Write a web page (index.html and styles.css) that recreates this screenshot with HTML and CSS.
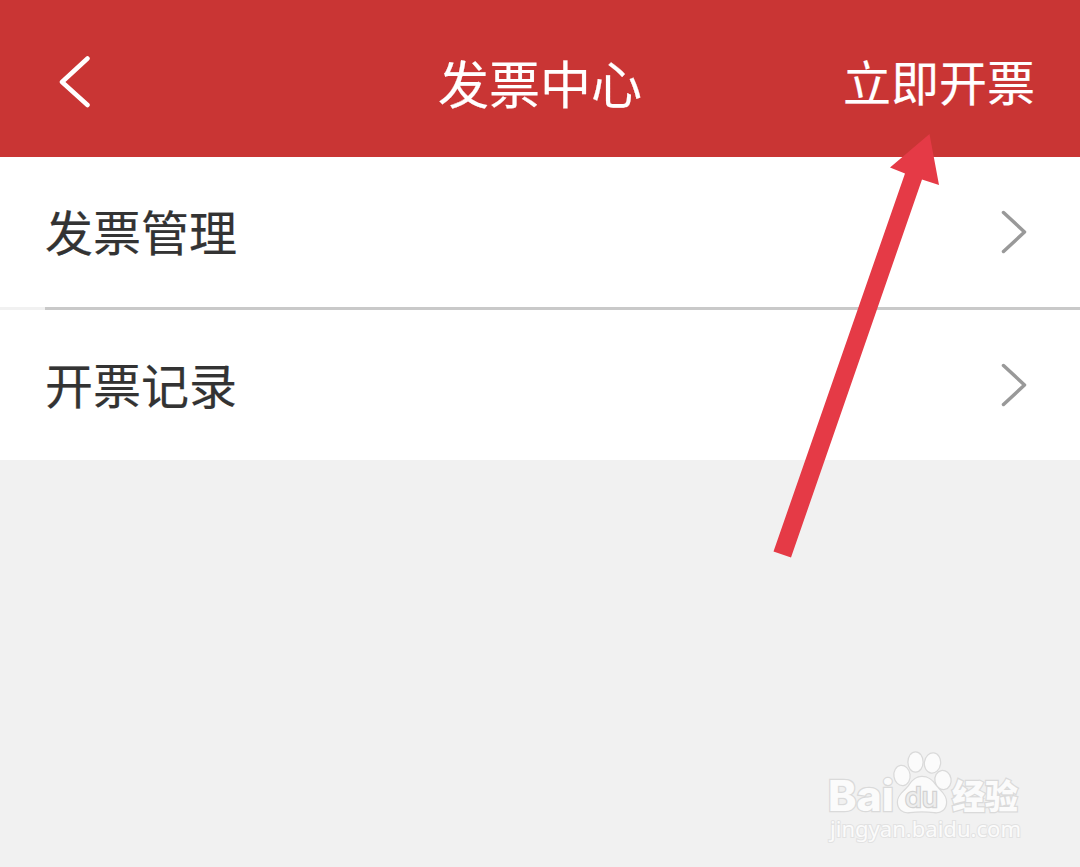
FILE: index.html
```html
<!DOCTYPE html>
<html lang="zh-CN">
<head>
    <meta charset="utf-8">
    <meta name="viewport" content="width=device-width, initial-scale=1">
    <title>发票中心</title>
    <link rel="stylesheet" href="styles.css">
</head>
<body>
    <header class="header">
        <button class="back-btn" aria-label="返回">
            <svg width="34" height="54" viewBox="0 0 34 54">
                <path d="M30.5 2.5L5 26L30.5 49"/>
            </svg>
        </button>
        <h1>发票中心</h1>
        <button class="header-btn">立即开票</button>
    </header>
    <main class="list">
        <a class="list-item">
            <span>发票管理</span>
            <svg class="chevron" width="28" height="46" viewBox="0 0 28 46">
                <path d="M3.5 3.5L24.5 23L3.5 42.5"/>
            </svg>
        </a>
        <div class="divider"></div>
        <a class="list-item">
            <span>开票记录</span>
            <svg class="chevron" width="28" height="46" viewBox="0 0 28 46">
                <path d="M3.5 3.5L24.5 23L3.5 42.5"/>
            </svg>
        </a>
    </main>

    <!-- Pointer to the invoice button -->
    <svg class="arrow" width="180" height="440" viewBox="760 125 180 440">
        <polygon points="929.5,134 939,185 922,179.500 791,557.500 773.500,551.500 905,173.500 890,167.500"/>
    </svg>

    <!-- Watermark -->
    <svg class="watermark" width="210" height="105" viewBox="820 745 210 105">
        <g class="mark">
            <text class="mark-latin" x="828" y="811" textLength="66" lengthAdjust="spacingAndGlyphs">Bai</text>
            <ellipse cx="902" cy="775.500" rx="7.500" ry="9.500" transform="rotate(-8 902 775.500)"/>
            <ellipse cx="915.500" cy="762" rx="7" ry="9.500"/>
            <ellipse cx="932.500" cy="763" rx="7.500" ry="9.500" transform="rotate(8 932.500 763)"/>
            <ellipse cx="943" cy="780" rx="7.500" ry="9" transform="rotate(-10 943 780)"/>
            <path d="M922 777C916 777 912 781 909 786C905 791 898 795 898 802C898 809 903 813 910 812C918 811 926 811 934 812C941 813 946 809 946 802C946 795 940 791 936 786C932 780 928 777 922 777Z"/>
            <text class="mark-cn" x="952" y="809" textLength="66" lengthAdjust="spacingAndGlyphs">经验</text>
            <text class="mark-url" x="830" y="837" textLength="191" lengthAdjust="spacingAndGlyphs">jingyan.baidu.com</text>
        </g>
        <text class="mark-du" x="905" y="807" textLength="33" lengthAdjust="spacingAndGlyphs">du</text>
    </svg>
</body>
</html>
```
FILE: styles.css
```css
body {
    background-color: #f1f1f1;
    font-family: "Noto Sans CJK SC", sans-serif;
    margin: 0;
    overflow: hidden;
}
button {
    background: none;
    border: none;
    padding: 0;
    color: inherit;
    font: inherit;
    cursor: pointer;
}
svg {
    display: block;
    fill: none;
}
/* Header */
.header {
    display: grid;
    grid-template-columns: 1fr auto 1fr;
    align-items: center;
    height: 157px;
    padding: 8px 45px 0 57px;
    box-sizing: border-box;
    background-color: #c93534;
    color: #fff;
    -webkit-text-stroke: 0.2px;
}
.header h1 {
    margin: 0 0 2px -12px; /* Keeps the title on the page centre */
    font-size: 51px;
    font-weight: 400;
    line-height: 72px;
}
.back-btn {
    justify-self: start;
}
.back-btn path {
    stroke: #fff;
    stroke-width: 4.5;
    stroke-linecap: round;
    stroke-linejoin: round;
}
.header-btn {
    justify-self: end;
    margin-bottom: 5px;
    font-size: 48px;
    line-height: 70px;
}
/* List */
.list {
    background-color: #fff;
}
.list-item {
    display: flex;
    align-items: center;
    justify-content: space-between;
    height: 150px;
    padding: 0 52px 0 45px;
    color: #333;
    font-size: 48px;
    line-height: 70px;
    -webkit-text-stroke: 0.2px;
}
.list-item span {
    margin-bottom: 4px;
}
.chevron path {
    stroke: #999;
    stroke-width: 3.5;
    stroke-linecap: round;
    stroke-linejoin: round;
}
.divider {
    height: 3px;
    background: linear-gradient(to right, #f1f1f1 45px, #c9c9c9 45px);
}
/* Overlays */
.arrow {
    position: absolute;
    left: 760px;
    top: 125px;
    fill: #e53a46;
    pointer-events: none;
}
.watermark {
    position: absolute;
    left: 820px;
    top: 745px;
    pointer-events: none;
}
.mark {
    fill: #fbfbfb;
    stroke: #dadada;
    stroke-width: 2.5;
    paint-order: stroke;
}
.mark-latin {
    font: 800 42px Inter, sans-serif;
}
.mark-cn {
    font: 900 34px "Noto Sans CJK SC", sans-serif;
}
.mark-url {
    font: 22px "Noto Sans", sans-serif;
    stroke: #e2e2e2;
    stroke-width: 2;
}
.mark-du {
    font: 27px Inter, sans-serif;
    fill: #ededed;
    stroke: #d2d2d2;
    stroke-width: 2.5;
    paint-order: stroke;
}
```
